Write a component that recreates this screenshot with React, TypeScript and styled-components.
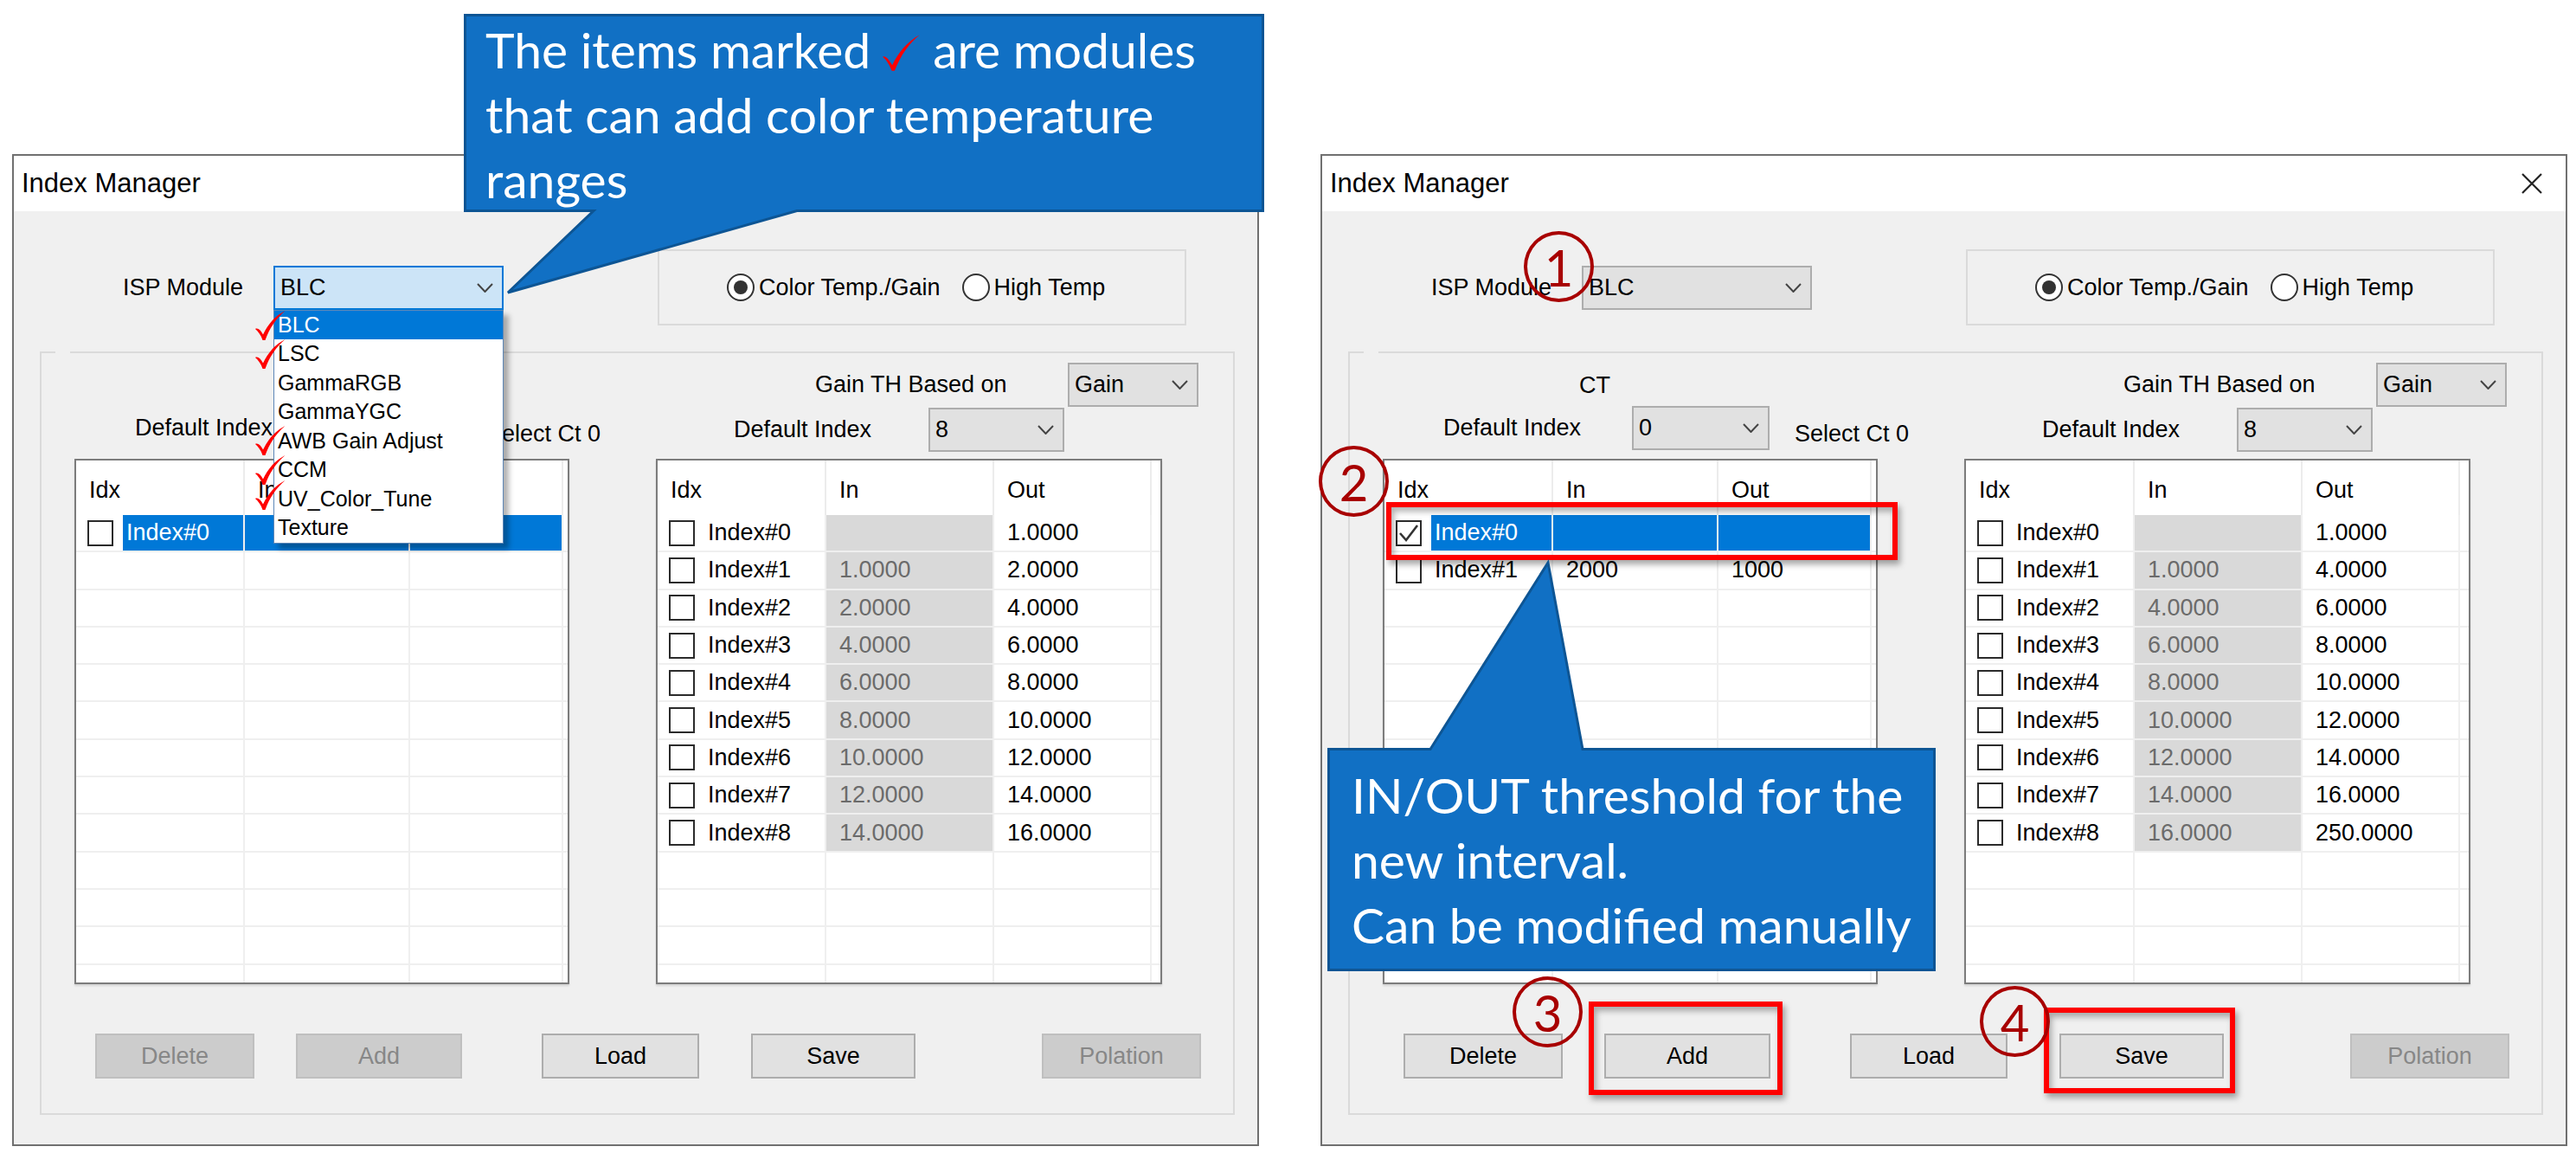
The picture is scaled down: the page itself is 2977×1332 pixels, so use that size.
import React from 'react'
import styled, { createGlobalStyle } from 'styled-components'

const GlobalStyle = createGlobalStyle`
  html, body {
    margin: 0;
    padding: 0;
    background: #ffffff;
  }
  body {
    width: 2977px;
    height: 1332px;
    overflow: hidden;
    font-family: "Liberation Sans", Arial, sans-serif;
  }
`

const Page = styled.div`
  position: relative;
  width: 2977px;
  height: 1332px;
  box-sizing: border-box;
  padding: 178px 0 0 14px;
  display: flex;
  align-items: flex-start;
  gap: 71px;
`

/* ---------- dialog frame ---------- */

const Dialog = styled.div`
  width: 1441px;
  height: 1146px;
  box-sizing: border-box;
  border: 2px solid #707070;
  background: #f0f0f0;
  display: flex;
  flex-direction: column;
  font-size: 27px;
  color: #000;
`

const TitleBar = styled.div`
  height: 64px;
  flex: none;
  background: #ffffff;
  display: flex;
  align-items: center;
  justify-content: space-between;
  padding: 0 26px 0 9px;
  font-size: 31px;
`

const Body = styled.div`
  flex: 1;
  display: flex;
  flex-direction: column;
  padding: 44px 0 0 30px;
`

const TopRow = styled.div`
  height: 88px;
  margin-left: 96px;
  display: flex;
  align-items: center;
`

const FieldLabel = styled.span<{ $width: number }>`
  width: ${(p) => p.$width}px;
  flex: none;
  white-space: nowrap;
`

const ComboWrap = styled.div`
  position: relative;
  flex: none;
`

const ComboBox = styled.div<{ $width: number; $focused?: boolean }>`
  width: ${(p) => p.$width}px;
  height: 51px;
  box-sizing: border-box;
  border: 2px solid ${(p) => (p.$focused ? '#0078d7' : '#adadad')};
  background: ${(p) => (p.$focused ? '#cce4f7' : '#e1e1e1')};
  display: flex;
  align-items: center;
  justify-content: space-between;
  padding: 0 10px 0 6px;
  flex: none;
`

const RadioGroup = styled.div`
  width: 611px;
  height: 88px;
  margin-left: 178px;
  box-sizing: border-box;
  border: 2px solid #dadada;
  display: flex;
  align-items: center;
  padding-left: 78px;
`

const RadioOption = styled.label<{ $gap?: number }>`
  display: flex;
  align-items: center;
  gap: 5px;
  margin-left: ${(p) => p.$gap ?? 0}px;
`

const RadioDot = styled.span<{ $checked?: boolean }>`
  width: 32px;
  height: 32px;
  box-sizing: border-box;
  border-radius: 50%;
  border: 2px solid #333;
  background: #fff;
  display: inline-flex;
  align-items: center;
  justify-content: center;

  &::after {
    content: '';
    width: 16px;
    height: 16px;
    border-radius: 50%;
    background: #333;
    display: ${(p) => (p.$checked ? 'block' : 'none')};
  }
`

const GroupBox = styled.div`
  position: relative;
  width: 1381px;
  height: 882px;
  margin-top: 30px;
  box-sizing: border-box;
  border: 2px solid #dadada;
  display: flex;
  flex-direction: column;

  &::before {
    content: '';
    position: absolute;
    top: -2px;
    left: 16px;
    width: 17px;
    height: 2px;
    background: #f0f0f0;
  }
`

const Panels = styled.div`
  display: flex;
  align-items: flex-start;
  height: 729px;
`

const LeftPanel = styled.div`
  width: 574px;
  margin-left: 38px;
  display: flex;
  flex-direction: column;
`

const RightPanel = styled.div`
  width: 586px;
  margin-left: 98px;
  padding-top: 10px;
  display: flex;
  flex-direction: column;
`

const CaptionRow = styled.div`
  height: 60px;
  box-sizing: border-box;
  padding: 14px 0 0 227px;
  display: flex;
  align-items: center;
`

const FieldRow = styled.div<{ $indent: number }>`
  height: 52px;
  padding-left: ${(p) => p.$indent}px;
  display: flex;
  align-items: center;
`

const SideNote = styled.span`
  margin: 14px 0 0 29px;
  white-space: nowrap;
`

/* ---------- list views ---------- */

const ListView = styled.div<{ $width: number; $gap: number }>`
  width: ${(p) => p.$width}px;
  height: 607px;
  margin-top: ${(p) => p.$gap}px;
  box-sizing: border-box;
  border: 2px solid #7c7c7c;
  box-shadow: 0 2px 2px rgba(0, 0, 0, 0.12);
  background: #ffffff;
  overflow: hidden;
  display: flex;
  flex-direction: column;
`

const HeaderRow = styled.div<{ $cols: string }>`
  display: grid;
  grid-template-columns: ${(p) => p.$cols};
  height: 63px;
  flex: none;
`

const HeaderCell = styled.div<{ $last?: boolean }>`
  box-sizing: border-box;
  padding: 5px 0 0 15px;
  display: flex;
  align-items: center;
  border-right: ${(p) => (p.$last ? 'none' : '2px solid #ececec')};
`

const DataRow = styled.div<{ $cols: string }>`
  display: grid;
  grid-template-columns: ${(p) => p.$cols};
  height: 43.3px;
  flex: none;
`

const IdxCell = styled.div`
  box-sizing: border-box;
  border-right: 2px solid #efefef;
  border-bottom: 2px solid #efefef;
  display: flex;
  align-items: stretch;
  padding-left: 13px;
`

const CheckBox = styled.span`
  width: 30px;
  height: 30px;
  box-sizing: border-box;
  border: 2px solid #2b2b2b;
  background: #fff;
  align-self: center;
  flex: none;
  margin-right: 11px;
  display: flex;
  align-items: center;
  justify-content: center;
`

const IdxLabel = styled.span<{ $selected?: boolean }>`
  flex: 1;
  display: flex;
  align-items: center;
  padding-left: 4px;
  background: ${(p) => (p.$selected ? '#0078d7' : 'transparent')};
  color: ${(p) => (p.$selected ? '#ffffff' : '#000')};
`

const ValueCell = styled.div<{ $shaded?: boolean; $selected?: boolean; $last?: boolean }>`
  box-sizing: border-box;
  border-right: ${(p) => (p.$last ? 'none' : '2px solid #efefef')};
  border-bottom: 2px solid #efefef;
  display: flex;
  align-items: center;
  padding-left: 15px;
  background: ${(p) => (p.$selected ? '#0078d7' : p.$shaded ? '#d9d9d9' : 'transparent')};
  color: ${(p) => (p.$shaded ? '#6b6b6b' : '#000')};
`

/* ---------- buttons ---------- */

const ButtonRow = styled.div`
  display: flex;
  margin-top: 57px;
  padding-left: 62px;
`

const Button = styled.div<{ $width: number; $offset: number; $disabled?: boolean }>`
  width: ${(p) => p.$width}px;
  height: 52px;
  margin-left: ${(p) => p.$offset}px;
  box-sizing: border-box;
  border: 2px solid ${(p) => (p.$disabled ? '#bfbfbf' : '#adadad')};
  background: ${(p) => (p.$disabled ? '#cccccc' : '#e1e1e1')};
  color: ${(p) => (p.$disabled ? '#878787' : '#000')};
  display: flex;
  align-items: center;
  justify-content: center;
`

/* ---------- dropdown popup ---------- */

const DropList = styled.div`
  position: absolute;
  top: 100%;
  left: 0;
  width: 100%;
  box-sizing: border-box;
  border: 1px solid #5e88b8;
  background: #ffffff;
  box-shadow: 6px 6px 6px rgba(0, 0, 0, 0.3);
  font-size: 25px;
  z-index: 2;
`

const DropItem = styled.div<{ $selected?: boolean }>`
  position: relative;
  height: 33.5px;
  display: flex;
  align-items: center;
  padding-left: 4px;
  background: ${(p) => (p.$selected ? '#0078d7' : 'transparent')};
  color: ${(p) => (p.$selected ? '#ffffff' : '#000')};
`

const ItemMark = styled.span<{ $shift: number }>`
  position: absolute;
  left: -23px;
  top: ${(p) => p.$shift}px;
  width: 36px;
  height: 35px;
`

/* ---------- annotations ---------- */

const CalloutBox = styled.div<{ $x: number; $y: number; $w: number; $h: number }>`
  position: absolute;
  left: ${(p) => p.$x}px;
  top: ${(p) => p.$y}px;
  width: ${(p) => p.$w}px;
  height: ${(p) => p.$h}px;
  z-index: 5;
`

const CalloutShape = styled.svg`
  position: absolute;
  left: 0;
  top: 0;
  overflow: visible;
`

const CalloutText = styled.div<{ $padTop: number; $padLeft: number }>`
  position: relative;
  padding: ${(p) => p.$padTop}px 0 0 ${(p) => p.$padLeft}px;
  font-family: Lato, "Open Sans", sans-serif;
  font-size: 57px;
  line-height: 75px;
  color: #ffffff;
  white-space: nowrap;
`

const InlineMark = styled.svg`
  vertical-align: -4px;
  margin: 0 14px 0 12px;
`

const StepCircle = styled.div<{ $x: number; $y: number }>`
  position: absolute;
  left: ${(p) => p.$x}px;
  top: ${(p) => p.$y}px;
  width: 81px;
  height: 82px;
  box-sizing: border-box;
  border: 4px solid #a80000;
  border-radius: 50%;
  display: flex;
  align-items: center;
  justify-content: center;
  font-family: Lato, "Open Sans", sans-serif;
  font-size: 58px;
  color: #a80000;
  z-index: 6;
`

const RedFrame = styled.div<{ $x: number; $y: number; $w: number; $h: number }>`
  position: absolute;
  left: ${(p) => p.$x}px;
  top: ${(p) => p.$y}px;
  width: ${(p) => p.$w}px;
  height: ${(p) => p.$h}px;
  box-sizing: border-box;
  border: 6px solid #ff0000;
  box-shadow: 3px 5px 7px rgba(0, 0, 0, 0.35), inset 3px 5px 7px rgba(0, 0, 0, 0.3);
  z-index: 4;
`

/* ---------- small drawings ---------- */

const Chevron = () => (
  <svg width="19" height="11" viewBox="0 0 19 11">
    <polyline points="1,1 9.5,10 18,1" fill="none" stroke="#444" strokeWidth="2" />
  </svg>
)

const CloseIcon = () => (
  <svg width="26" height="26" viewBox="0 0 26 26">
    <path d="M2 2 L24 24 M24 2 L2 24" stroke="#222" strokeWidth="2.2" />
  </svg>
)

const RedTick = () => (
  <svg width="36" height="35" viewBox="0 0 36 35">
    <path
      d="M1 21 C4 19.5 7 22 10 27.5 C16 15 24 6 35.5 0 C25 9 17.5 20 12.5 34 L9.5 34 C7.5 28 4.5 24 1 21 Z"
      fill="#ff0000"
    />
  </svg>
)

const BoxTick = () => (
  <svg width="24" height="22" viewBox="0 0 24 22">
    <polyline points="2,11 9,19 22,2" fill="none" stroke="#333" strokeWidth="2.6" />
  </svg>
)

/* ---------- data ---------- */

interface RowData {
  idx: string
  inVal?: string
  outVal?: string
  checked?: boolean
  selected?: boolean
  shaded?: boolean
}

const gainRows = (ins: string[], outs: string[]): RowData[] =>
  outs.map((out, i) => ({ idx: `Index#${i}`, inVal: ins[i], outVal: out, shaded: true }))

const leftGainRows = gainRows(
  ['', '1.0000', '2.0000', '4.0000', '6.0000', '8.0000', '10.0000', '12.0000', '14.0000'],
  ['1.0000', '2.0000', '4.0000', '6.0000', '8.0000', '10.0000', '12.0000', '14.0000', '16.0000'],
)

const rightGainRows = gainRows(
  ['', '1.0000', '4.0000', '6.0000', '8.0000', '10.0000', '12.0000', '14.0000', '16.0000'],
  ['1.0000', '4.0000', '6.0000', '8.0000', '10.0000', '12.0000', '14.0000', '16.0000', '250.0000'],
)

const modules = [
  { name: 'BLC', mark: 0 },
  { name: 'LSC', mark: 0 },
  { name: 'GammaRGB' },
  { name: 'GammaYGC' },
  { name: 'AWB Gain Adjust', mark: -1 },
  { name: 'CCM', mark: 0 },
  { name: 'UV_Color_Tune', mark: -5 },
  { name: 'Texture' },
]

const ROW_COUNT = 13

interface IndexTableProps {
  width: number
  cols: string
  gap: number
  rows: RowData[]
}

const IndexTable = ({ width, cols, gap, rows }: IndexTableProps) => (
  <ListView $width={width} $gap={gap}>
    <HeaderRow $cols={cols}>
      <HeaderCell>Idx</HeaderCell>
      <HeaderCell>In</HeaderCell>
      <HeaderCell>Out</HeaderCell>
      <HeaderCell $last />
    </HeaderRow>
    {Array.from({ length: ROW_COUNT }).map((_, i) => {
      const row = rows[i]
      return (
        <DataRow key={`row-${i}`} $cols={cols}>
          <IdxCell>
            {row && (
              <>
                <CheckBox>{row.checked && <BoxTick />}</CheckBox>
                <IdxLabel $selected={row.selected}>{row.idx}</IdxLabel>
              </>
            )}
          </IdxCell>
          <ValueCell $shaded={row?.shaded} $selected={row?.selected}>{row?.inVal}</ValueCell>
          <ValueCell $selected={row?.selected}>{row?.outVal}</ValueCell>
          <ValueCell $last />
        </DataRow>
      )
    })}
  </ListView>
)

interface ManagerProps {
  variant: 'left' | 'right'
}

const IndexManager = ({ variant }: ManagerProps) => {
  const isLeft = variant === 'left'
  const ctRows: RowData[] = isLeft
    ? [{ idx: 'Index#0', selected: true }]
    : [
      { idx: 'Index#0', checked: true, selected: true },
      { idx: 'Index#1', inVal: '2000', outVal: '1000' },
    ]

  return (
    <Dialog>
      <TitleBar>
        <span>Index Manager</span>
        <CloseIcon />
      </TitleBar>
      <Body>
        <TopRow>
          <FieldLabel $width={174}>ISP Module</FieldLabel>
          <ComboWrap>
            <ComboBox $width={266} $focused={isLeft}>
              <span>BLC</span>
              <Chevron />
            </ComboBox>
            {isLeft && (
              <DropList>
                {modules.map((m, i) => (
                  <DropItem key={m.name} $selected={i === 0}>
                    {m.mark !== undefined && (
                      <ItemMark $shift={m.mark}>
                        <RedTick />
                      </ItemMark>
                    )}
                    {m.name}
                  </DropItem>
                ))}
              </DropList>
            )}
          </ComboWrap>
          <RadioGroup>
            <RadioOption>
              <RadioDot $checked />
              Color Temp./Gain
            </RadioOption>
            <RadioOption $gap={25}>
              <RadioDot />
              High Temp
            </RadioOption>
          </RadioGroup>
        </TopRow>

        <GroupBox>
          <Panels>
            <LeftPanel>
              {/* the open module list hides this caption on the left dialog */}
              <CaptionRow>{isLeft ? null : 'CT'}</CaptionRow>
              <FieldRow $indent={70}>
                <FieldLabel $width={218}>Default Index</FieldLabel>
                <ComboBox $width={159}>
                  <span>0</span>
                  <Chevron />
                </ComboBox>
                <SideNote>Select Ct 0</SideNote>
              </FieldRow>
              <IndexTable width={572} cols="195px 191px 177px 1fr" gap={10} rows={ctRows} />
            </LeftPanel>

            <RightPanel>
              <FieldRow $indent={184}>
                <FieldLabel $width={292}>Gain TH Based on</FieldLabel>
                <ComboBox $width={151}>
                  <span>Gain</span>
                  <Chevron />
                </ComboBox>
              </FieldRow>
              <FieldRow $indent={90}>
                <FieldLabel $width={225}>Default Index</FieldLabel>
                <ComboBox $width={157}>
                  <span>8</span>
                  <Chevron />
                </ComboBox>
              </FieldRow>
              <IndexTable
                width={585}
                cols="195px 194px 182px 1fr"
                gap={8}
                rows={isLeft ? leftGainRows : rightGainRows}
              />
            </RightPanel>
          </Panels>

          <ButtonRow>
            <Button $width={184} $offset={0} $disabled={isLeft}>Delete</Button>
            <Button $width={192} $offset={48} $disabled={isLeft}>Add</Button>
            <Button $width={182} $offset={92}>Load</Button>
            <Button $width={190} $offset={60}>Save</Button>
            <Button $width={184} $offset={146} $disabled>Polation</Button>
          </ButtonRow>
        </GroupBox>
      </Body>
    </Dialog>
  )
}

const App = () => (
  <Page>
    <GlobalStyle />
    <IndexManager variant="left" />
    <IndexManager variant="right" />

    <CalloutBox $x={536} $y={16} $w={925} $h={229}>
      <CalloutShape width="925" height="229">
        <path
          d="M1.5 1.5 H923.5 V227.5 H385 L51 322 L150 227.5 H1.5 Z"
          fill="#1170c4"
          stroke="#0d5594"
          strokeWidth="3"
        />
      </CalloutShape>
      <CalloutText $padTop={4} $padLeft={25}>
        The items marked
        <InlineMark width="46" height="44" viewBox="0 0 42 40">
          <path
            d="M2 24 C5 23 8 26 12 33 C18 20 28 8 41 1 C30 10 21 22 14.5 39 L11.5 39 C9 32 6 28 2 24 Z"
            fill="#ff0000"
          />
        </InlineMark>
        are modules
        <br />
        that can add color temperature
        <br />
        ranges
      </CalloutText>
    </CalloutBox>

    <CalloutBox $x={1534} $y={864} $w={703} $h={258}>
      <CalloutShape width="703" height="258">
        <path
          d="M1.5 1.5 H119 L255 -214 L295 1.5 H701.5 V256.5 H1.5 Z"
          fill="#1170c4"
          stroke="#0d5594"
          strokeWidth="3"
        />
      </CalloutShape>
      <CalloutText $padTop={17} $padLeft={28}>
        IN/OUT threshold for the
        <br />
        new interval.
        <br />
        Can be modified manually
      </CalloutText>
    </CalloutBox>

    <RedFrame $x={1602} $y={580} $w={591} $h={67} />
    <RedFrame $x={1836} $y={1157} $w={224} $h={108} />
    <RedFrame $x={2362} $y={1164} $w={221} $h={99} />

    <StepCircle $x={1761} $y={267}>1</StepCircle>
    <StepCircle $x={1524} $y={515}>2</StepCircle>
    <StepCircle $x={1748} $y={1128}>3</StepCircle>
    <StepCircle $x={2288} $y={1139}>4</StepCircle>
  </Page>
)

export default App
